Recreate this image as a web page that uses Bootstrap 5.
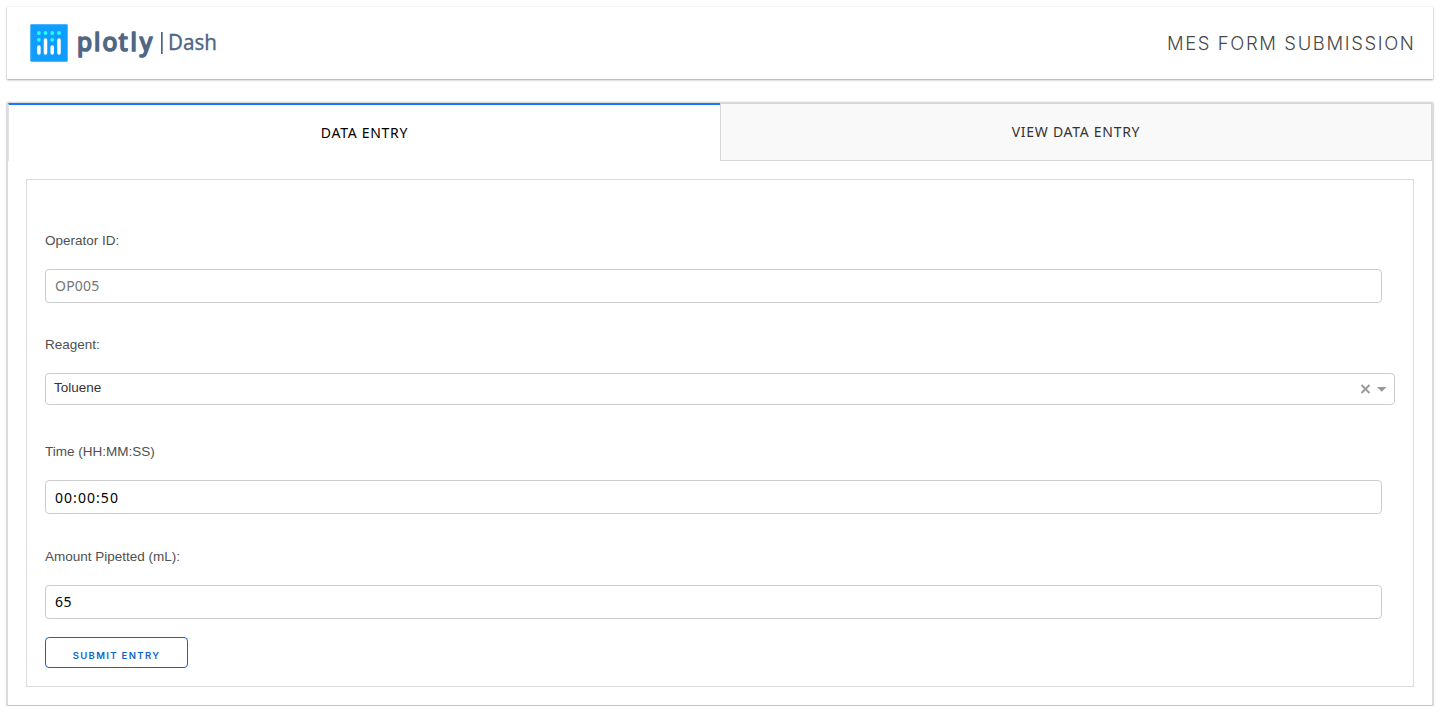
<!DOCTYPE html>
<html lang="en">
<head>
<meta charset="utf-8">
<meta name="viewport" content="width=device-width, initial-scale=1">
<title>MES Form Submission</title>
<link href="https://cdn.jsdelivr.net/npm/bootstrap@5.3.0/dist/css/bootstrap.min.css" rel="stylesheet">
<style>
body{font-family:"Liberation Sans",sans-serif;font-size:13.5px;color:#505050;background:#fff;padding:7px 10px 0 7px;line-height:20px}
.banner{height:72px;padding:0 17.500px 0 23px;box-shadow:0 1px 2px rgba(0,0,0,.35),0 0 1px rgba(0,0,0,.15)}
.banner h1{font:300 18.5px/24px "Inter",sans-serif;letter-spacing:1.6px;color:#484848;padding-bottom:1px}
.panel{margin-top:23px;height:604px;border:1px solid #dcdcdc;border-bottom-color:#c4c4c4;box-shadow:0 1px 2px rgba(0,0,0,.35),0 0 1px rgba(0,0,0,.2)}
.nav-tabs.form-tabs{height:58px;border:0;flex-wrap:nowrap}
.form-tabs .nav-item{width:50%}
.form-tabs .nav-link{margin:0;padding:0;width:100%;height:58px;border-radius:0;border:1px solid #d6d6d6;background:#f9f9f9;color:#333;font:14px/56px "Noto Sans",sans-serif;letter-spacing:.72px}
.form-tabs .nav-link.active{border-top:2px solid #1975fa;border-right:0;border-bottom:0;background:#fff;color:#000}
.entry-form{margin:18px 18px 0;height:508px;border:1px solid #dcdcdc;padding:51px 18px 0}
.entry-form label{display:block;line-height:20px;margin-bottom:18px}
.entry-form .form-control{height:34px;width:1337px;border:1px solid #ccc;border-radius:4px;padding:0 9px 1px;font:14px/31px "Noto Sans",sans-serif;color:#000;letter-spacing:.45px}
.entry-form .form-control::placeholder{color:#757575;letter-spacing:.2px}
.entry-form #time{letter-spacing:1.05px;padding-bottom:0}
.picker{height:32px;width:1350px;border:1px solid #ccc;border-radius:4px;padding:0 7px 0 8px;color:#333}
.btn.submit{width:143px;height:31px;margin-top:18px;padding:6px 0 0;border:1px solid #1266c3;border-radius:4px;color:#0d66cf;font:600 9.5px/24px "Inter",sans-serif;letter-spacing:1.35px}
</style>
</head>
<body>
<header class="banner d-flex align-items-center justify-content-between">
<svg width="190" height="40" viewBox="30 23 190 40" role="img" aria-label="plotly Dash">
<rect x="30.3" y="24.3" width="37.4" height="37.4" rx="1" fill="#119dff"/>
<g stroke="#fff" stroke-width="3.5" stroke-linecap="round"><path d="M38.9 47v6M45.5 40v13M52.2 47v6M59 40v13"/></g>
<g fill="#25fefd"><circle cx="38.9" cy="33" r="1.9"/><circle cx="45.5" cy="33" r="1.9"/><circle cx="52.2" cy="33" r="1.9"/><circle cx="59" cy="33" r="1.9"/><circle cx="38.9" cy="39.8" r="1.9"/><circle cx="52.2" cy="39.8" r="1.9"/></g>
<g fill="#506784" font-family="Noto Sans, sans-serif">
<text x="77 94 102.500 118.800 130.500 139.800" y="50.8" font-size="24.500" stroke="#506784" stroke-width="1.7" stroke-linejoin="round">plotly</text>
<rect x="161" y="32" width="1.7" height="22"/>
<text x="168" y="50.3" font-size="22" textLength="49" lengthAdjust="spacingAndGlyphs" stroke="#506784" stroke-width=".3">Dash</text>
</g>
</svg>
<h1 class="m-0 text-uppercase">MES Form Submission</h1>
</header>
<main class="panel">
<ul class="nav nav-tabs form-tabs">
<li class="nav-item"><button class="nav-link active" type="button">DATA ENTRY</button></li>
<li class="nav-item"><button class="nav-link" type="button">VIEW DATA ENTRY</button></li>
</ul>
<form class="entry-form">
<label for="operator">Operator ID:</label>
<input id="operator" class="form-control" placeholder="OP005">
<label for="reagent" style="margin-top:32px">Reagent:</label>
<div id="reagent" class="picker d-flex justify-content-between">
<span style="line-height:28px">Toluene</span>
<svg width="28" height="30" viewBox="1359 374 28 30" aria-hidden="true"><path d="M1361.500 385l8 8m0-8l-8 8" stroke="#999" stroke-width="1.9"/><path d="M1377 387h9.500l-4.750 4.700z" fill="#999"/></svg>
</div>
<label for="time" style="margin-top:37px">Time (HH:MM:SS)</label>
<input id="time" class="form-control" value="00:00:50">
<label for="amount" style="margin-top:33px">Amount Pipetted (mL):</label>
<input id="amount" class="form-control" value="65">
<button class="btn submit d-block" type="button">SUBMIT ENTRY</button>
</form>
</main>
<script src="https://cdn.jsdelivr.net/npm/bootstrap@5.3.0/dist/js/bootstrap.bundle.min.js"></script>
</body>
</html>
